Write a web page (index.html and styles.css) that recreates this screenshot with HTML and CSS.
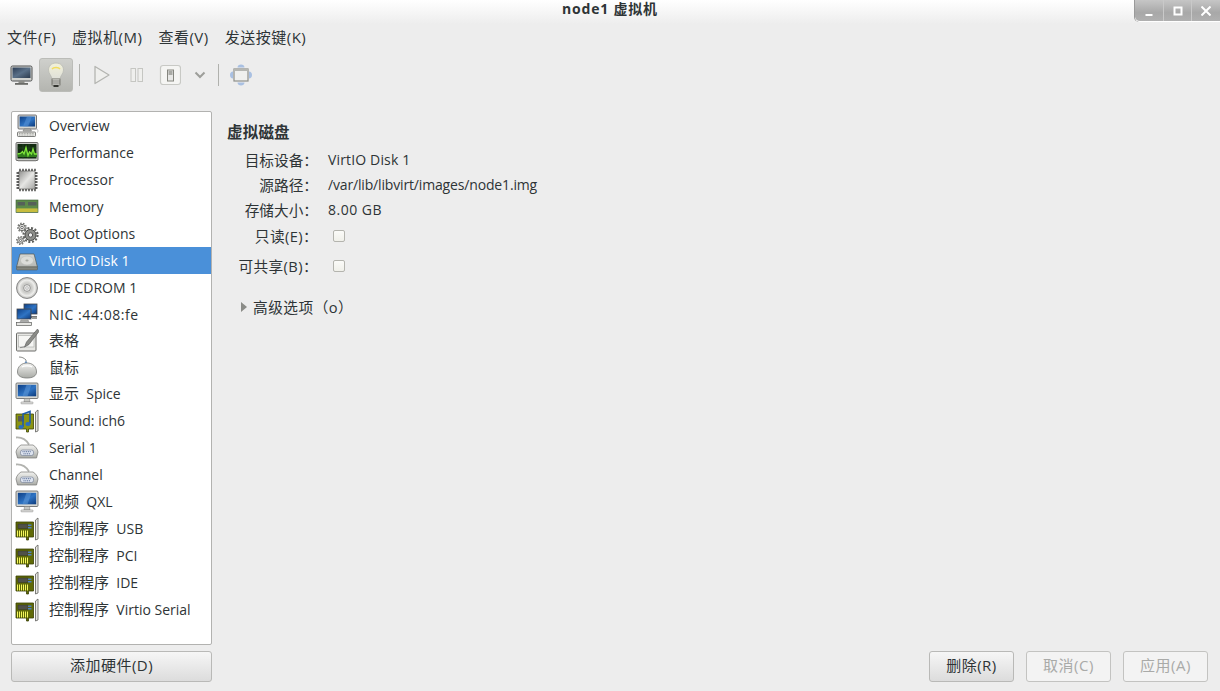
FILE: index.html
```html
<!DOCTYPE html>
<html lang="zh">
<head>
<meta charset="utf-8">
<title>node1 虚拟机</title>
<link rel="stylesheet" href="styles.css">
</head>
<body>
<svg class="defs" xmlns="http://www.w3.org/2000/svg" aria-hidden="true">
  <defs>
    <linearGradient id="gScreen" x1="0" y1="0" x2="1" y2="1"><stop offset="0" stop-color="#0d3f86"/><stop offset=".55" stop-color="#2f74c4"/><stop offset="1" stop-color="#0c3a7c"/></linearGradient>
    <linearGradient id="gMetal" x1="0" y1="0" x2="0" y2="1"><stop offset="0" stop-color="#f2f2f0"/><stop offset="1" stop-color="#a9aba6"/></linearGradient>
    <linearGradient id="gChip" x1="0" y1="0" x2="1" y2="1"><stop offset="0" stop-color="#8f8f8d"/><stop offset=".5" stop-color="#e6e6e4"/><stop offset="1" stop-color="#a5a5a3"/></linearGradient>
    <linearGradient id="gDisk" x1="0" y1="0" x2="0" y2="1"><stop offset="0" stop-color="#d8d9d6"/><stop offset="1" stop-color="#b4b6b2"/></linearGradient>
    <radialGradient id="gCd"><stop offset="0" stop-color="#fff"/><stop offset=".45" stop-color="#c9c9c6"/><stop offset=".75" stop-color="#eeeeec"/><stop offset="1" stop-color="#b5b5b2"/></radialGradient>
    <linearGradient id="gBulb" x1="0" y1="0" x2="0" y2="1"><stop offset="0" stop-color="#f2f1d8"/><stop offset="1" stop-color="#dfe0da"/></linearGradient>
    <linearGradient id="gToolScreen" x1="0" y1="0" x2="1" y2="1"><stop offset="0" stop-color="#2c3d55"/><stop offset=".5" stop-color="#5a7088"/><stop offset="1" stop-color="#2c3a4c"/></linearGradient>

    <symbol id="i-overview" viewBox="0 0 24 24">
      <rect x="3" y="1" width="18.5" height="14" rx="1" fill="#d5d6d2" stroke="#55575a" stroke-width=".8"/>
      <rect x="4.600" y="2.500" width="15.400" height="10" fill="url(#gScreen)"/>
      <path d="M8 12.500l4-10h5l-4 10z" fill="#5c96d8" opacity=".5"/>
      <path d="M9 15h6.500l1 2h-8.500z" fill="#b9bab6" stroke="#666" stroke-width=".5"/>
      <rect x="2.500" y="18" width="18" height="4.500" rx=".8" fill="#e8e8e5" stroke="#5d5e5c" stroke-width=".8"/>
      <path d="M4 19.500h15M4 21h15" stroke="#888a85" stroke-width=".7" stroke-dasharray="1 .6"/>
      <path d="M21 15c2 0 2.500 1.500 1.500 3.500" fill="none" stroke="#aaa" stroke-width=".7"/>
    </symbol>
    <symbol id="i-perf" viewBox="0 0 24 24">
      <rect x="1" y="1.500" width="22" height="18" rx="1" fill="#c9cac6" stroke="#4c4d4b" stroke-width=".8"/>
      <rect x="2.500" y="3" width="19" height="14.500" fill="#132b12"/>
      <path d="M2.500 7h19M2.500 12h19M8 3v14.500M14 3v14.500" stroke="#2a5628" stroke-width=".5"/>
      <path d="M2.500 13l3-.5 2-2 1.500 2.500 2-6.500 2 8 1.500-3.500 2 2 1.500-5 1.500 5h2.500v3h-19z" fill="#2f7a1c"/>
      <path d="M2.500 13l3-.5 2-2 1.500 2.500 2-6.500 2 8 1.500-3.500 2 2 1.500-5 1.500 5h2.500" fill="none" stroke="#7fe63a" stroke-width="1.300"/>
      <path d="M3 19.800h18" stroke="#8a8b88"/>
    </symbol>
    <symbol id="i-cpu" viewBox="0 0 24 24">
      <path d="M4 3h16v18h-16z" fill="url(#gChip)" stroke="#6b6b69" stroke-width=".7"/>
      <path d="M5 .8v2.200M8 .8v2.200M11 .8v2.200M14 .8v2.200M17 .8v2.200M20 .8v2.200M5 21v2.200M8 21v2.200M11 21v2.200M14 21v2.200M17 21v2.200M20 21v2.200M1.500 5h2.500M1.500 8h2.500M1.500 11h2.500M1.500 14h2.500M1.500 17h2.500M1.500 20h2.500M20 5h2.500M20 8h2.500M20 11h2.500M20 14h2.500M20 17h2.500M20 20h2.500" stroke="#2e2e2c" stroke-width="1.300"/>
    </symbol>
    <symbol id="i-mem" viewBox="0 0 24 24">
      <rect x="1" y="5" width="22" height="12.500" fill="#5d8a4a" stroke="#3d5c36" stroke-width=".6"/>
      <rect x="2.500" y="7" width="7.500" height="3.500" fill="#55605a"/>
      <rect x="13" y="7" width="8.500" height="3.500" fill="#55605a"/>
      <rect x="1.500" y="13.500" width="21" height="3.500" fill="#e2d64a"/>
      <path d="M3 13.500v3.500M5 13.500v3.500M7 13.500v3.500M9 13.500v3.500M11 13.500v3.500M13 13.500v3.500M15 13.500v3.500M17 13.500v3.500M19 13.500v3.500M21 13.500v3.500" stroke="#8b8422" stroke-width=".6"/>
    </symbol>
    <symbol id="i-gears" viewBox="0 0 24 24">
      <circle cx="15.500" cy="13" r="5.500" fill="#8d8e8a" stroke="#4a4b49" stroke-width="1"/>
      <circle cx="15.500" cy="13" r="7" fill="none" stroke="#5f605d" stroke-width="2.200" stroke-dasharray="2 1.700"/>
      <circle cx="15.500" cy="13" r="2.200" fill="#eee" stroke="#555"/>
      <circle cx="7" cy="5.500" r="3.200" fill="#e9e9e6" stroke="#696a67"/>
      <circle cx="7" cy="5.500" r="4.200" fill="none" stroke="#777875" stroke-width="1.400" stroke-dasharray="1.500 1.400"/>
      <circle cx="7" cy="5.500" r="1.300" fill="#fff" stroke="#666"/>
      <circle cx="5.500" cy="18.500" r="2.800" fill="#e9e9e6" stroke="#696a67"/>
      <circle cx="5.500" cy="18.500" r="3.800" fill="none" stroke="#777875" stroke-width="1.400" stroke-dasharray="1.500 1.400"/>
      <circle cx="5.500" cy="18.500" r="1.100" fill="#fff" stroke="#666"/>
    </symbol>
    <symbol id="i-disk" viewBox="0 0 24 24">
      <path d="M5 5h14l3.500 13h-21z" fill="url(#gDisk)" stroke="#55574f" stroke-width=".7"/>
      <rect x="1.500" y="18" width="21" height="3" rx="1" fill="#85877f" stroke="#505249" stroke-width=".5"/>
      <ellipse cx="12" cy="11.500" rx="6.500" ry="4.500" fill="#dcddd9" stroke="#b4b6b0" stroke-width=".5"/>
      <ellipse cx="12" cy="11.500" rx="1.600" ry="1" fill="#a8aaa3"/>
    </symbol>
    <symbol id="i-cd" viewBox="0 0 24 24">
      <circle cx="12" cy="12" r="10.500" fill="url(#gCd)" stroke="#777" stroke-width=".8"/>
      <circle cx="12" cy="12" r="3.400" fill="#e8e8e6" stroke="#777" stroke-width=".7"/>
      <circle cx="12" cy="12" r="1.300" fill="#fff" stroke="#888" stroke-width=".5"/>
    </symbol>
    <symbol id="i-nic" viewBox="0 0 24 24">
      <rect x="9" y="1" width="13" height="10" fill="url(#gScreen)" stroke="#46484c" stroke-width=".8"/>
      <path d="M11 14h11" stroke="#777" stroke-width="2"/>
      <rect x="2" y="6" width="14" height="10" fill="url(#gScreen)" stroke="#46484c" stroke-width=".8"/>
      <path d="M6 17h7l1 1.500h-9z" fill="#b6b7b3" stroke="#666" stroke-width=".4"/>
      <rect x="1.500" y="19.500" width="15" height="3" fill="#e6e6e3" stroke="#5d5e5c" stroke-width=".7"/>
      <path d="M17 15h5" stroke="#9a9b97" stroke-width="2"/>
    </symbol>
    <symbol id="i-tablet" viewBox="0 0 24 24">
      <rect x="1.500" y="5" width="19.500" height="18" rx="1" fill="#e7e7e4" stroke="#6c6d6a"/>
      <rect x="3.500" y="7.500" width="15.500" height="11.500" fill="#f6f6f4" stroke="#a6a7a3" stroke-width=".6"/>
      <path d="M22.500 1l-11 13-2 5 4.500-2.500 10-13z" fill="#8b8c88" stroke="#555" stroke-width=".6"/>
      <path d="M5 19.700l5-1" stroke="#777" stroke-width=".8"/>
    </symbol>
    <symbol id="i-mouse" viewBox="0 0 24 24">
      <path d="M4 2c3 0 5 1 7 3v3" fill="none" stroke="#6b6c69" stroke-width=".8"/>
      <path d="M11 6l1.800 2.500h-3.600z" fill="#5a94d6"/>
      <path d="M2.500 17c0-5.500 4-9 9.500-9s9.500 3.500 9.500 9c0 4-4 6-9.500 6s-9.500-2-9.500-6z" fill="url(#gMetal)" stroke="#7a7b78" stroke-width=".8"/>
      <path d="M7 12c1.500-1.500 8.500-1.500 10 0" fill="none" stroke="#fff" stroke-width="1.200"/>
    </symbol>
    <symbol id="i-display" viewBox="0 0 24 24">
      <rect x="1" y="1" width="22" height="15.500" rx="1" fill="#d7d8d4" stroke="#5d5f61" stroke-width=".8"/>
      <rect x="2.800" y="2.800" width="18.400" height="11.500" fill="url(#gScreen)"/>
      <path d="M7.500 14.300l4-11.500h5l-4 11.500z" fill="#6aa1de" opacity=".45"/>
      <path d="M9.500 16.500h5l.5 3.500h-6z" fill="#c7c8c4" stroke="#777" stroke-width=".5"/>
      <rect x="6" y="20" width="12" height="1.800" rx=".6" fill="#eaeae7" stroke="#777" stroke-width=".5"/>
    </symbol>
    <symbol id="i-sound" viewBox="0 0 24 24">
      <path d="M1 5h17.500v15h-5v3h-2v-3h-10.500z" fill="#8a9412" stroke="#3f4506" stroke-width=".8"/>
      <rect x="3" y="7" width="6" height="5.500" fill="#5a5c52"/>
      <path d="M20.500 3l2.500-2v21l-2.500 1z" fill="#e8e8e4" stroke="#5f605c" stroke-width=".8"/>
      <path d="M8 18v-13l7-2.500v12" fill="none" stroke="#1e5ca8" stroke-width="1.600"/>
      <ellipse cx="6" cy="18" rx="2.600" ry="1.900" fill="#2a6fc0"/>
      <ellipse cx="13" cy="15" rx="2.600" ry="1.900" fill="#2a6fc0"/>
    </symbol>
    <symbol id="i-serial" viewBox="0 0 24 24">
      <path d="M1 1.500c6-.5 10 2 13 7" fill="none" stroke="#b2b3af" stroke-width="1.800"/>
      <path d="M6 9h12c2.500 1.500 4.500 4 5 7l-1.500 6h-19l-1.500-6c.5-3 2.500-5.500 5-7z" fill="url(#gMetal)" stroke="#757672" stroke-width=".7"/>
      <rect x="5.500" y="14" width="13" height="5.500" rx="2" fill="#dde3ee" stroke="#6f7b92" stroke-width=".6"/>
      <path d="M7.500 15.700h9M8.500 17.800h7" stroke="#506690" stroke-width="1" stroke-dasharray="1 .8"/>
    </symbol>
    <symbol id="i-card" viewBox="0 0 24 24">
      <path d="M1 5h17.500v15h-5v3h-2v-3h-10.500z" fill="#5f6906" stroke="#393f05" stroke-width=".8"/>
      <rect x="3" y="7" width="10" height="4.500" fill="#4f5049" stroke="#2a2b26" stroke-width=".4"/>
      <rect x="13" y="7.500" width="3.500" height="1.500" fill="#4d7fbe"/>
      <rect x="13" y="10" width="3.500" height="1.500" fill="#4d7fbe"/>
      <path d="M2.500 13.500v6M4.500 13.500v6M6.500 13.500v6M8.500 13.500v6M10.500 13.500v6M12.500 13.500v6" stroke="#f6f85e" stroke-width="1"/>
      <path d="M20.500 3l2.500-2v21l-2.500 1z" fill="#e8e8e4" stroke="#5f605c" stroke-width=".8"/>
    </symbol>
  </defs>
</svg>

<div class="window">
  <header class="titlebar">
    <span class="title">node1 虚拟机</span>
    <div class="wm-buttons">
      <span class="wm-btn"><svg width="10" height="10" viewBox="0 0 10 10"><rect x="1.500" y="8" width="7" height="2" fill="#fff"/></svg></span>
      <span class="wm-btn"><svg width="10" height="10" viewBox="0 0 10 10"><rect x="1.500" y="1.500" width="7" height="7" fill="none" stroke="#fff" stroke-width="2"/></svg></span>
      <span class="wm-btn"><svg width="10" height="10" viewBox="0 0 10 10"><path d="M.5.500l9 9M9.500.500l-9 9" stroke="#fff" stroke-width="2"/></svg></span>
    </div>
  </header>

  <nav class="menubar">
    <span>文件(F)</span><span>虚拟机(M)</span><span>查看(V)</span><span>发送按键(K)</span>
  </nav>

  <div class="toolbar">
    <span class="tool tool-console">
      <svg width="24" height="24" viewBox="0 0 24 24">
        <rect x="1" y="3" width="21" height="15" rx="1.500" fill="#d0d1cd" stroke="#4f5052" stroke-width="1"/>
        <rect x="2.500" y="4.500" width="18" height="10.500" fill="url(#gToolScreen)"/>
        <rect x="8.500" y="18" width="6" height="2" fill="#8b8c88"/>
        <rect x="5" y="20" width="13" height="1.800" fill="#6a6b68"/>
      </svg>
    </span>
    <span class="tool tool-details">
      <svg width="24" height="28" viewBox="0 0 24 28">
        <path d="M12 2c5 0 7.500 3.500 7.500 7 0 3.500-3 5.500-3.500 9h-8c-.5-3.500-3.500-5.500-3.500-9 0-3.500 2.500-7 7.500-7z" fill="url(#gBulb)" stroke="#b9bab4" stroke-width=".8"/>
        <path d="M8 8c1.500-2 6.500-2 8 0" fill="none" stroke="#f2dc5c" stroke-width="1.500"/>
        <rect x="8" y="18" width="8" height="6" fill="#eeeeec" stroke="#66675f" stroke-width=".8"/>
        <path d="M8 20h8M8 22h8" stroke="#55564f" stroke-width=".9"/>
        <rect x="9.500" y="24" width="5" height="2" fill="#33342f"/>
      </svg>
    </span>
    <span class="tool-sep"></span>
    <span class="tool tool-small tool-play">
      <svg width="24" height="24" viewBox="0 0 24 24"><path d="M6 3.500l14 8.500-14 8.500z" fill="#efefed" stroke="#b4b5b1" stroke-width="1.300" stroke-linejoin="round"/></svg>
    </span>
    <span class="tool tool-small">
      <svg width="24" height="24" viewBox="0 0 24 24"><rect x="8" y="5.500" width="4.500" height="13" fill="#efefed" stroke="#c5c6c2"/><rect x="15" y="5.500" width="4.500" height="13" fill="#efefed" stroke="#c5c6c2"/></svg>
    </span>
    <span class="tool tool-small">
      <svg width="24" height="24" viewBox="0 0 24 24"><rect x="3.500" y="2.500" width="20" height="19" rx="2.500" fill="#f5f5f3" stroke="#c8c9c5" stroke-width="1.200"/><rect x="10.500" y="7" width="6" height="11" fill="#e8e8e6" stroke="#85867f"/><rect x="11.500" y="8" width="4" height="4" fill="#a9aaa5"/></svg>
    </span>
    <span class="tool tool-arrow">
      <svg width="12" height="8" viewBox="0 0 12 8"><path d="M1.500 1.500l4.500 4.500 4.500-4.500" fill="none" stroke="#9d9e9a" stroke-width="2"/></svg>
    </span>
    <span class="tool-sep"></span>
    <span class="tool tool-fs">
      <svg width="24" height="24" viewBox="0 0 24 24">
        <path d="M12 1.500c2 0 3.500 1.200 3.500 3h-7c0-1.800 1.500-3 3.500-3zM12 22.500c2 0 3.500-1.200 3.500-3h-7c0 1.800 1.500 3 3.500 3zM1 12c0-2 1.200-3.500 3-3.500v7c-1.800 0-3-1.500-3-3.500zM23 12c0-2-1.200-3.500-3-3.500v7c1.800 0 3-1.500 3-3.500z" fill="#a9c0e2"/>
        <rect x="5" y="6" width="14" height="12" fill="#f0f0ee" stroke="#8e8f8a" stroke-width="1.200"/>
        <rect x="5" y="6" width="14" height="2" fill="#b6b7b3"/>
      </svg>
    </span>
  </div>

  <main class="main">
    <aside class="sidebar">
      <ul class="hw-list">
        <li class="hw-row"><svg class="hw-icon"><use href="#i-overview"/></svg><span>Overview</span></li>
        <li class="hw-row"><svg class="hw-icon"><use href="#i-perf"/></svg><span>Performance</span></li>
        <li class="hw-row"><svg class="hw-icon"><use href="#i-cpu"/></svg><span>Processor</span></li>
        <li class="hw-row"><svg class="hw-icon"><use href="#i-mem"/></svg><span>Memory</span></li>
        <li class="hw-row"><svg class="hw-icon"><use href="#i-gears"/></svg><span>Boot Options</span></li>
        <li class="hw-row is-selected"><svg class="hw-icon"><use href="#i-disk"/></svg><span>VirtIO Disk 1</span></li>
        <li class="hw-row"><svg class="hw-icon"><use href="#i-cd"/></svg><span>IDE CDROM 1</span></li>
        <li class="hw-row is-short"><svg class="hw-icon"><use href="#i-nic"/></svg><span class="num">NIC :44:08:fe</span></li>
        <li class="hw-row"><svg class="hw-icon"><use href="#i-tablet"/></svg><span class="zh">表格</span></li>
        <li class="hw-row"><svg class="hw-icon"><use href="#i-mouse"/></svg><span class="zh">鼠标</span></li>
        <li class="hw-row"><svg class="hw-icon"><use href="#i-display"/></svg><span><span class="zh">显示</span>  Spice</span></li>
        <li class="hw-row"><svg class="hw-icon"><use href="#i-sound"/></svg><span>Sound: ich6</span></li>
        <li class="hw-row"><svg class="hw-icon"><use href="#i-serial"/></svg><span>Serial 1</span></li>
        <li class="hw-row"><svg class="hw-icon"><use href="#i-serial"/></svg><span>Channel</span></li>
        <li class="hw-row"><svg class="hw-icon"><use href="#i-display"/></svg><span><span class="zh">视频</span>  QXL</span></li>
        <li class="hw-row"><svg class="hw-icon"><use href="#i-card"/></svg><span><span class="zh">控制程序</span>  USB</span></li>
        <li class="hw-row"><svg class="hw-icon"><use href="#i-card"/></svg><span><span class="zh">控制程序</span>  PCI</span></li>
        <li class="hw-row"><svg class="hw-icon"><use href="#i-card"/></svg><span><span class="zh">控制程序</span>  IDE</span></li>
        <li class="hw-row"><svg class="hw-icon"><use href="#i-card"/></svg><span><span class="zh">控制程序</span>  Virtio Serial</span></li>
      </ul>
      <button class="btn btn-add" type="button">添加硬件(D)</button>
    </aside>

    <section class="content">
      <h2 class="section-title">虚拟磁盘</h2>
      <div class="fields">
        <span class="f-label">目标设备：</span><span class="f-value f-disk">VirtIO Disk 1</span>
        <span class="f-label">源路径：</span><span class="f-value f-path">/var/lib/libvirt/images/node1.img</span>
        <span class="f-label">存储大小：</span><span class="f-value f-num">8.00 GB</span>
        <span class="f-label f-mnemonic">只读(E)：</span><span class="f-value"><span class="check"></span></span>
        <span class="f-label f-mnemonic">可共享(B)：</span><span class="f-value"><span class="check"></span></span>
      </div>
      <div class="expander"><span class="exp-arrow"></span><span>高级选项（o）</span></div>
      <div class="actions">
        <button class="btn" type="button">删除(R)</button>
        <button class="btn is-disabled" type="button">取消(C)</button>
        <button class="btn is-disabled" type="button">应用(A)</button>
      </div>
    </section>
  </main>
</div>
</body>
</html>
```
FILE: styles.css
```css
* { box-sizing: border-box; }
html, body { margin: 0; padding: 0; height: 100%; }
body {
  background: #ededed;
  color: #2e3436;
  font-family: "Open Sans", "Noto Sans CJK SC", sans-serif;
  font-size: 14px;
  overflow: hidden;
}
.defs { position: absolute; width: 0; height: 0; }
.window { display: flex; flex-direction: column; width: 1220px; height: 691px; }

.titlebar {
  position: relative;
  height: 24px;
  flex: none;
  display: flex;
  justify-content: center;
  align-items: center;
  padding-bottom: 6px;
  background: linear-gradient(#ffffff, #ededed);
}
.title { font-weight: 700; font-size: 14px; letter-spacing: .8px; color: #2e3436; line-height: 18px; }
.wm-buttons {
  position: absolute;
  top: 0;
  right: 0;
  width: 85px;
  height: 22px;
  display: flex;
  background: linear-gradient(#c6c6c6, #a8a8a8 60%, #b0b0b0);
  border-bottom-left-radius: 5px;
  border-bottom: 1px solid #fff;
  box-shadow: -1px 0 0 #9a9a9a;
}
.wm-btn {
  flex: 1;
  display: flex;
  align-items: center;
  justify-content: center;
  border-right: 1px solid #c9c9c9;
}
.wm-btn:last-child { border-right: 0; }

.menubar {
  flex: none;
  height: 26px;
  display: flex;
  align-items: center;
  gap: 16px;
  padding-left: 7px;
  font-size: 15px;
  letter-spacing: .5px;
  line-height: 20px;
}

.toolbar {
  flex: none;
  height: 50px;
  display: flex;
  align-items: center;
  padding-left: 10px;
}
.tool { display: flex; align-items: center; justify-content: center; }
.tool-console { width: 24px; height: 34px; margin-right: 5px; }
.tool-details {
  width: 34px;
  height: 34px;
  border: 1px solid #bbbcb8;
  border-radius: 3px;
  background: linear-gradient(#cfd0cc, #b4b5b0);
}
.tool-sep { width: 1px; height: 22px; background: #b0b1ad; margin: 0 6px; }
.tool-small { width: 24px; height: 24px; margin-right: 10px; }
.tool-play { margin-left: 3px; }
.tool-arrow { width: 16px; height: 24px; margin: 0 4px 0 1px; }
.tool-fs { width: 24px; height: 24px; margin-left: 4px; }

.main { flex: 1; display: flex; min-height: 0; padding: 11px 12px 9px 11px; gap: 15px; }

.sidebar { width: 201px; flex: none; display: flex; flex-direction: column; gap: 6px; }
.hw-list {
  flex: 1;
  list-style: none;
  margin: 0;
  padding: 0;
  background: #fff;
  border: 1px solid #b2b2b0;
  border-radius: 2px;
}
.hw-row {
  height: 27px;
  display: flex;
  align-items: center;
  gap: 10px;
  padding-left: 3px;
  white-space: pre;
  line-height: 20px;
}
.hw-row.is-short { height: 25px; padding-top: 2px; }
.hw-row.is-selected { background: #4a90d9; color: #fff; }
.hw-icon { width: 24px; height: 24px; flex: none; }
.zh { font-size: 15px; }
.num { letter-spacing: .55px; }

.btn {
  height: 31px;
  padding: 0 0 4px;
  font: inherit;
  font-size: 15px;
  letter-spacing: .5px;
  line-height: 20px;
  color: #2e3436;
  border: 1px solid #b9b9b7;
  border-radius: 3px;
  background: linear-gradient(#f6f6f6, #dcdcdc);
}
.btn-add { width: 201px; flex: none; }

.content { flex: 1; display: flex; flex-direction: column; min-width: 0; }
.section-title {
  margin: 11px 0 0;
  height: 20px;
  line-height: 20px;
  font-size: 15.5px;
  letter-spacing: .2px;
  font-weight: 700;
  color: #2e3436;
}
.fields {
  display: grid;
  grid-template-columns: 91px 1fr;
  grid-template-rows: 25px 25px 25px 27px 33px;
  column-gap: 10px;
  margin-top: 5px;
  align-items: center;
  line-height: 20px;
}
.f-label { text-align: right; font-size: 14.67px; white-space: nowrap; }
.f-mnemonic { letter-spacing: .4px; }
.f-value { font-size: 14px; white-space: nowrap; }
.f-disk { letter-spacing: .15px; }
.f-path { letter-spacing: -.16px; }
.f-num { letter-spacing: .5px; }
.check {
  display: inline-block;
  vertical-align: middle;
  margin: -2px 0 0 5px;
  width: 12px;
  height: 12px;
  border: 1px solid #b4b4ae;
  border-radius: 2px;
  background: linear-gradient(#fbfbf9, #f0f0ea);
}
.expander {
  display: flex;
  align-items: center;
  gap: 6px;
  margin: 15px 0 0 14px;
  font-size: 14.67px;
  letter-spacing: .5px;
  line-height: 20px;
}
.exp-arrow {
  width: 0;
  height: 0;
  border-left: 6px solid #8b8c88;
  border-top: 5px solid transparent;
  border-bottom: 5px solid transparent;
}
.actions { margin-top: auto; display: flex; justify-content: flex-end; gap: 12px; }
.actions .btn { width: 85px; }
.btn.is-disabled { background: #f3f3f3; color: #a9aaa8; border-color: #c3c3c1; }
```
